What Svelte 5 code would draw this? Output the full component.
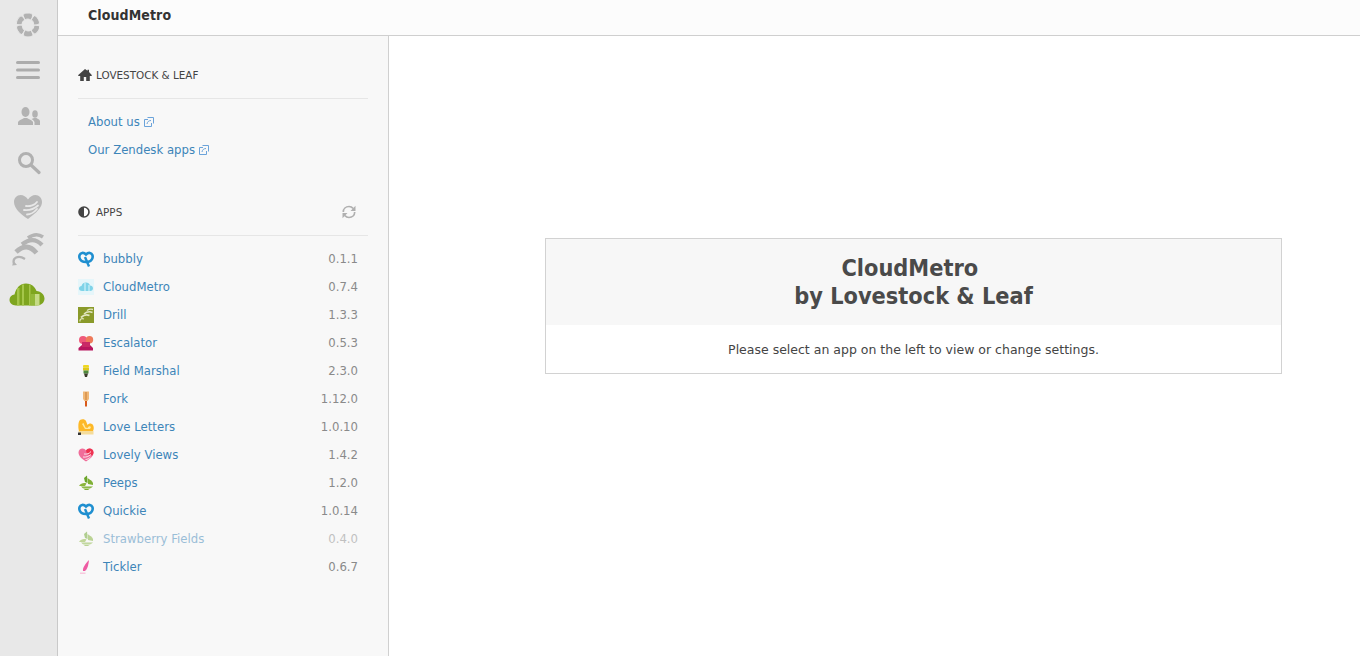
<script>
  const apps = [
    { name: 'bubbly', v: '0.1.1', icon: 'q' },
    { name: 'CloudMetro', v: '0.7.4', icon: 'cloud' },
    { name: 'Drill', v: '1.3.3', icon: 'drill' },
    { name: 'Escalator', v: '0.5.3', icon: 'esc' },
    { name: 'Field Marshal', v: '2.3.0', icon: 'field' },
    { name: 'Fork', v: '1.12.0', icon: 'fork' },
    { name: 'Love Letters', v: '1.0.10', icon: 'love' },
    { name: 'Lovely Views', v: '1.4.2', icon: 'heart' },
    { name: 'Peeps', v: '1.2.0', icon: 'peeps' },
    { name: 'Quickie', v: '1.0.14', icon: 'q' },
    { name: 'Strawberry Fields', v: '0.4.0', icon: 'peeps', off: true },
    { name: 'Tickler', v: '0.6.7', icon: 'tick' }
  ];
  const petals = [0, 60, 120, 180, 240, 300];
</script>

<div class="page">
  <nav class="rail">
    <svg class="r flower" width="24" height="24" viewBox="0 0 24 24">
      <g fill="#b2b2b2" stroke="#e8e8e8" stroke-width="0.9">
        {#each petals as deg}
          <path d="M7 1.500C10 -.5 14.500 -.2 16.500 1.500C16.800 3.500 16 5.500 14.600 7C13 5.800 11 5.700 9.300 6.600C8 5 7.200 3.300 7 1.500z" transform="rotate({deg} 12 12)" />
        {/each}
      </g>
    </svg>
    <svg class="r burger" width="24" height="20" viewBox="0 0 24 20">
      <g fill="#acacac">
        <rect x="0" y="1" width="24" height="3" rx="1.500" />
        <rect x="0" y="8.500" width="24" height="3" rx="1.500" />
        <rect x="0" y="16" width="24" height="3" rx="1.500" />
      </g>
    </svg>
    <svg class="r people" width="22" height="18" viewBox="0 0 22 18">
      <g fill="#b2b2b2">
        <ellipse cx="7.500" cy="5" rx="4" ry="5" />
        <path d="M0 18v-3c1-2 4-2.500 6-4h3c2 1.500 5 2 6 4v3z" />
        <ellipse cx="17" cy="7" rx="2.800" ry="3.800" />
        <path d="M16 11h2.500c1.500 1 3 1.500 3.500 3v4h-5.500v-3c-.5-1.500-2-2.500-3-3z" />
      </g>
    </svg>
    <svg class="r search" width="24" height="24" viewBox="0 0 24 24">
      <circle cx="9" cy="9" r="6.500" fill="none" stroke="#b0b0b0" stroke-width="3" />
      <path d="M14 14l8 7.500" stroke="#b0b0b0" stroke-width="3.200" stroke-linecap="round" />
    </svg>
    <svg class="r hand" width="30" height="26" viewBox="0 0 30 26">
      <path fill="#b8b8b8" d="M15 25C9 21 1 15 1 8c0-4 3-7 6.500-7 3 0 5.500 1.500 7.500 4.500C17 2.500 19.500 1 22.500 1 26 1 29 4 29 8c0 2.500-1 4.500-2.500 6.500l-3.500 4z" />
      <path fill="none" stroke="#e8e8e8" stroke-width="1.800" stroke-linecap="round" d="M13 12c4 .5 9-1 11-4M11 16c4 .5 10-1 14-4.500M14 20.500c3 0 7-2 10-5.500" />
    </svg>
    <svg class="r drill" width="32" height="34" viewBox="0 0 32 34">
      <g fill="none" stroke="#b4b4b4">
        <path stroke-width="3.600" d="M16 6Q24 0 31 5" />
        <path stroke-width="4.200" d="M10 12.500Q21 3.500 30 13" />
        <path stroke-width="4.800" d="M4 20Q15 9.500 24.500 21" />
        <path stroke-width="2.200" d="M2 32C0 26 6 22.500 13 27" />
      </g>
      <path fill="#b4b4b4" d="M0 33.500l5-.5-3-3.500z" />
    </svg>
    <svg class="r metro" width="36" height="23" viewBox="0 0 36 23">
      <path fill="#7ea51f" d="M7 22.500c-4 0-6.500-2.500-6.500-5.700 0-3 2-5 5-5.300C7 5 11 .5 17 .5c5 0 9 3 10.500 7.500 4.500.3 8 3.800 8 7.500 0 4-3.300 7-7.500 7z" />
      <g>
        <rect x="8" y="5" width="2.500" height="17.500" fill="#a5c64a" />
        <rect x="13" y="1.500" width="2" height="21" fill="#a5c64a" />
        <rect x="20" y="1.500" width="1.500" height="21" fill="#a5c64a" />
        <rect x="21.500" y="11" width="4.500" height="11.500" fill="#93b83a" />
        <rect x="26" y="11" width="4.500" height="11.500" fill="#c5da86" />
      </g>
    </svg>
  </nav>

  <div class="body">
    <header class="top">CloudMetro</header>
    <div class="columns">
      <aside class="side">
        <div class="sec-head first">
          <span class="title">
            <svg width="14" height="12" viewBox="0 0 14 12"><path fill="#444" d="M7 0L0 6.200l.6.700H2.200V12h3.600V8h2.400v4h3.600V6.900h1.600l.6-.7L11 3V.8H9.500v1z" /></svg>
            LOVESTOCK &amp; LEAF
          </span>
        </div>
        <ul class="links">
          {#each ['About us', 'Our Zendesk apps'] as l}
            <li>
              <a href="#top">{l}</a>
              <svg class="ext" width="10" height="10" viewBox="0 0 10 10">
                <path fill="none" stroke="#6ba3da" d="M.5 2.500h3.500M.5 2.500v7h7V6" />
                <path fill="none" stroke="#6ba3da" d="M3 7C3.300 4.800 4.800 3.500 7 3.500" />
                <path fill="none" stroke="#6ba3da" d="M3.500 .5h6v6" />
              </svg>
            </li>
          {/each}
        </ul>
        <div class="sec-head apps-head">
          <span class="title apps-title">
            <svg width="12" height="12" viewBox="0 0 12 12"><circle cx="6" cy="6" r="5" fill="#fff" stroke="#444" stroke-width="1.600" /><path fill="#444" d="M6 1a5 5 0 0 0 0 10z" /></svg>
            APPS
          </span>
          <svg class="refresh" width="14" height="14" viewBox="0 0 14 14">
            <g fill="none" stroke="#b0b0b0" stroke-width="1.700">
              <path d="M1.300 7C1.300 3.800 3.800 1.500 7 1.500c1.800 0 3.200.8 4.200 2" />
              <path d="M12.700 7c0 3.200-2.500 5.500-5.700 5.500-1.800 0-3.200-.8-4.200-2" />
            </g>
            <path fill="#b0b0b0" d="M13.500 .8V6H8.500zM.5 13.200V8h5z" />
          </svg>
        </div>
        <ul class="apps">
          {#each apps as a}
            <li class:off={a.off}>
              <svg class="ai" width="16" height="16" viewBox="0 0 16 16">
                {#if a.icon === 'q'}
                  <path fill="none" stroke="#1f8fd0" stroke-width="2.600" d="M4 2C6 1.500 7 2.500 8 3.500 9 2.500 10 1.500 12 2 14.500 2.500 15 5 14.500 7 14 9 11.500 11 8 11 4.500 11 2 9 1.500 7 1 5 1.500 2.500 4 2z" />
                  <path fill="none" stroke="#1f8fd0" stroke-width="2.400" d="M7 6l4 9.500" />
                {:else if a.icon === 'cloud'}
                  <rect width="16" height="16" fill="#e6f6fa" />
                  <path fill="#7fd3e8" d="M4 12c-2 0-3-1-3-2.500S2 7 3.500 7C4 4.500 6 3.500 8 3.500s3.500 1 4 3c1.800 0 3 1.300 3 2.800S14 12 12 12z" />
                  <path fill="#aee5f2" d="M6 4h2v8H6zM10 6h2v6h-2z" />
                {:else if a.icon === 'drill'}
                  <rect width="16" height="16" fill="#8a9a2a" />
                  <g fill="none" stroke="#e2e6c0">
                    <path stroke-width="1.400" d="M9 3.500Q12 1.500 15 2.500" />
                    <path stroke-width="1.600" d="M6 7Q10 3.500 14.500 5.500" />
                    <path stroke-width="1.800" d="M3 10.500Q7 6.500 11.500 8.500" />
                    <path stroke-width="1.200" d="M2 14.500C1.500 12 3.500 11 6 12" />
                  </g>
                {:else if a.icon === 'esc'}
                  <path fill="#b8165e" d="M4 10h8l3 3v2.500H.5V13z" />
                  <circle cx="5" cy="5" r="4" fill="#ef5a7a" />
                  <circle cx="11.500" cy="4.800" r="3.700" fill="#ee7a5a" />
                  <path fill="#c92a66" d="M4 7h8v5H4z" />
                {:else if a.icon === 'field'}
                  <rect x="5" y="2" width="6" height="2.500" rx="1" fill="#f0d820" />
                  <rect x="5" y="4.500" width="6" height="3" fill="#e0c818" />
                  <rect x="5.500" y="7.500" width="5" height="3" fill="#4f8a3c" />
                  <path fill="#3a3a2a" d="M6 10.500h4L9 14H7z" />
                {:else if a.icon === 'fork'}
                  <path fill="#f0b878" d="M5 .5h6v7.500l-1.500 2h-3L5 8z" />
                  <path fill="#dd9a55" d="M7 1h2v8H7z" />
                  <path fill="#d8591a" d="M7 10h2v5.500H7z" />
                {:else if a.icon === 'love'}
                  <path fill="#fdb827" d="M2 1C4 -.2 7 0 8 2L9.500 6C11 4 13.500 4 15 6 16 8 16 10 15 12H1C0 9 0 3 2 1z" />
                  <path fill="#ffe9a0" d="M4 5L7 10H12L13 8C12 7 10.500 7 9.500 9L7.500 8.500 5.500 4z" />
                  <path fill="#f5dc9a" d="M0 12h15.500v3.500H3z" />
                  <path fill="#333" d="M0 13.500h3V16H0z" />
                {:else if a.icon === 'heart'}
                  <path fill="#f06d9a" d="M8 14.500C4 12 .5 9 .5 5.500.5 3 2.500 1.500 4.500 1.500 6 1.500 7.200 2.300 8 3.500 8.800 2.300 10 1.500 11.500 1.500c2 0 4 1.500 4 4 0 3.500-3.500 6.500-7.500 9z" />
                  <path fill="#ee3350" d="M8 3.500C8.800 2.300 10 1.500 11.500 1.500c2 0 4 1.500 4 4 0 1-.3 2-1 3L9 7z" />
                  <path fill="none" stroke="#fde3ea" stroke-width="1" d="M6 7c3 .5 5.500-.5 7-2.500M5 10c3 .5 5.500-.5 8-2.500M7.500 12.500c2 0 3.500-1 5-2.500" />
                {:else if a.icon === 'peeps'}
                  <path fill="#6ba52a" d="M9 .5L6 3 7 7 9.500 8z" />
                  <path fill="#8bb63c" d="M1 11C3 8 6 7.500 8.500 8.500L7 11z" />
                  <path fill="#7fb034" d="M9.500 3C12 4.500 14 6 15 8V10L10 9z" />
                  <path fill="#7fb034" d="M3 11.500H15L10 15H7z" />
                  <path stroke="#eef5dc" stroke-width=".7" d="M5 13.300h8" />
                {:else if a.icon === 'tick'}
                  <path fill="#ee5ba3" d="M5 12c-.5-3 2-7 6-11-.5 5-1.500 9-4 11z" />
                  <path fill="#f7c9dd" d="M2 13.500h5.500V15H2z" />
                {/if}
              </svg>
              <a class="name" href="#top">{a.name}</a>
              <span class="ver">{a.v}</span>
            </li>
          {/each}
        </ul>
      </aside>
      <main class="main">
        <section class="card">
          <h1>CloudMetro&nbsp;<br />by Lovestock &amp; Leaf</h1>
          <p>Please select an app on the left to view or change settings.</p>
        </section>
      </main>
    </div>
  </div>
</div>

<style>
  :global(body) { margin: 0; background: #fff; }
  .page {
    display: flex;
    height: 656px;
    overflow: hidden;
    font-family: "DejaVu Sans", Verdana, sans-serif;
    font-size: 11.7px;
    color: #4a4a4a;
  }
  .rail {
    box-sizing: border-box;
    width: 58px;
    flex: none;
    background: #e8e8e8;
    border-right: 1px solid #c9c9c9;
    display: flex;
    flex-direction: column;
    align-items: center;
    padding: 13px 1px 0 0;
  }
  .r { display: block; flex: none; }
  .burger { margin-top: 23px; }
  .people { margin-top: 27px; margin-left: 1px; }
  .search { margin-top: 26px; margin-left: 1px; }
  .hand { margin-top: 19px; }
  .drill { margin-top: 12px; }
  .metro { margin-top: 17px; margin-left: -2px; }
  .body { flex: 1; min-width: 0; display: flex; flex-direction: column; }
  .top {
    box-sizing: border-box;
    height: 36px;
    background: #fcfcfc;
    border-bottom: 1px solid #cfcfcf;
    padding: 7px 0 0 30px;
    font-size: 14px;
    font-stretch: condensed;
    letter-spacing: 0.1px;
    font-weight: 700;
    line-height: 16px;
    color: #333;
  }
  .columns { flex: 1; display: flex; min-height: 0; }
  .side {
    box-sizing: border-box;
    width: 331px;
    flex: none;
    background: #f8f8f8;
    border-right: 1px solid #d0d0d0;
    padding: 0 20px;
  }
  .sec-head {
    height: 30px;
    display: flex;
    justify-content: space-between;
    align-items: center;
    border-bottom: 1px solid #e6e6e6;
  }
  .first { margin-top: 24px; padding-bottom: 8px; }
  .apps-head { margin-top: 33px; padding-bottom: 8px; padding-right: 12px; }
  .title {
    display: flex;
    align-items: center;
    gap: 4px;
    font-size: 10.4px;
    color: #444;
  }
  .apps-title { gap: 6px; }
  ul { list-style: none; margin: 0; padding: 0; }
  .links { padding: 9px 0 0 10px; }
  .links li { height: 28px; display: flex; align-items: center; gap: 4px; }
  a { color: #3d85b8; text-decoration: none; }
  .ext { flex: none; }
  .apps { padding-top: 9px; }
  .apps li {
    height: 28px;
    display: flex;
    align-items: center;
    padding-right: 10px;
  }
  .ai { flex: none; margin-right: 9px; }
  .name { flex: 1; }
  .ver { color: #8a8a8a; }
  .off { opacity: 0.5; }
  .main { flex: 1; min-width: 0; background: #fff; padding: 202px 0 0 156px; }
  .card {
    box-sizing: border-box;
    width: 737px;
    border: 1px solid #d2d2d2;
  }
  h1 {
    margin: 0;
    background: #f7f7f7;
    height: 86px;
    box-sizing: border-box;
    padding-top: 15px;
    text-align: center;
    font-size: 23.3px;
    font-stretch: condensed;
    line-height: 28px;
    font-weight: 700;
    color: #4a4a4a;
  }
  p {
    margin: 0;
    height: 48px;
    line-height: 50px;
    text-align: center;
    font-size: 12.5px;
    color: #444;
  }
</style>
